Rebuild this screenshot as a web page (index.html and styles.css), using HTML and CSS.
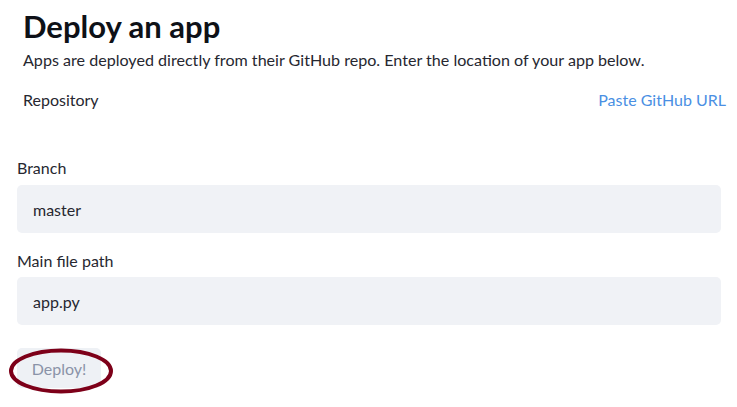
FILE: index.html
```html
<!DOCTYPE html>
<html>
<head>
<meta charset="utf-8">
<link rel="stylesheet" href="styles.css">
</head>
<body>
<div class="page">
  <header class="intro">
    <h1 class="title">Deploy an app</h1>
    <p class="subtitle">Apps are deployed directly from their GitHub repo. Enter the location of your app below.</p>
    <div class="repo-row">
      <span class="repo-label">Repository</span>
      <a class="paste-link">Paste GitHub URL</a>
    </div>
  </header>
  <form class="form">
    <div class="field">
      <label class="field-label">Branch</label>
      <div class="input">master</div>
    </div>
    <div class="field">
      <label class="field-label">Main file path</label>
      <div class="input">app.py</div>
    </div>
    <div class="actions">
      <button type="button" class="deploy-btn">Deploy!</button>
      <svg class="highlight" width="106" height="48" viewBox="0 0 106 48"><ellipse cx="53" cy="24" rx="50" ry="20.5" fill="none" stroke="#7d0019" stroke-width="4"/></svg>
    </div>
  </form>
</div>
</body>
</html>
```

FILE: styles.css
```css
* { box-sizing: border-box; }
html, body { margin: 0; padding: 0; background: #fff; }
body {
  font-family: Lato, "Open Sans", sans-serif;
  color: #262730;
}
.page {
  width: 737px;
  padding: 0 16px 0 17px;
}
.intro {
  padding: 0 0 0 6px;
  margin-right: -5px;
}
.title {
  margin: 0;
  padding-top: 7px;
  font-size: 31px;
  line-height: 38px;
  font-weight: 700;
  color: #0e1117;
}
.subtitle {
  margin: 5px 0 0;
  font-size: 16.1px;
  line-height: 20px;
  color: #262730;
}
.repo-row {
  display: flex;
  justify-content: space-between;
  align-items: center;
  margin-top: 20px;
  font-size: 16px;
  line-height: 20px;
}
.paste-link {
  color: #4a8fe3;
  cursor: pointer;
}
.form {
  margin-top: 48px;
  display: flex;
  flex-direction: column;
}
.field-label {
  display: block;
  font-size: 16px;
  line-height: 20px;
  color: #262730;
  margin-bottom: 7px;
}
.field + .field { margin-top: 18px; }
.field + .field .field-label { margin-bottom: 6px; }
.input {
  height: 48px;
  width: 704px;
  background: #f0f2f6;
  border-radius: 5px;
  padding: 0 16px;
  display: flex;
  align-items: center;
  font-size: 16px;
  color: #262730;
}
.actions {
  position: relative;
  margin-top: 23px;
  height: 50px;
}
.deploy-btn {
  width: 84px;
  height: 40px;
  border: none;
  border-radius: 5px;
  background: #eef1f5;
  color: #8a93a8;
  font-family: inherit;
  font-size: 16px;
  padding: 0;
}
.highlight {
  position: absolute;
  left: -9px;
  top: -1px;
}
```
